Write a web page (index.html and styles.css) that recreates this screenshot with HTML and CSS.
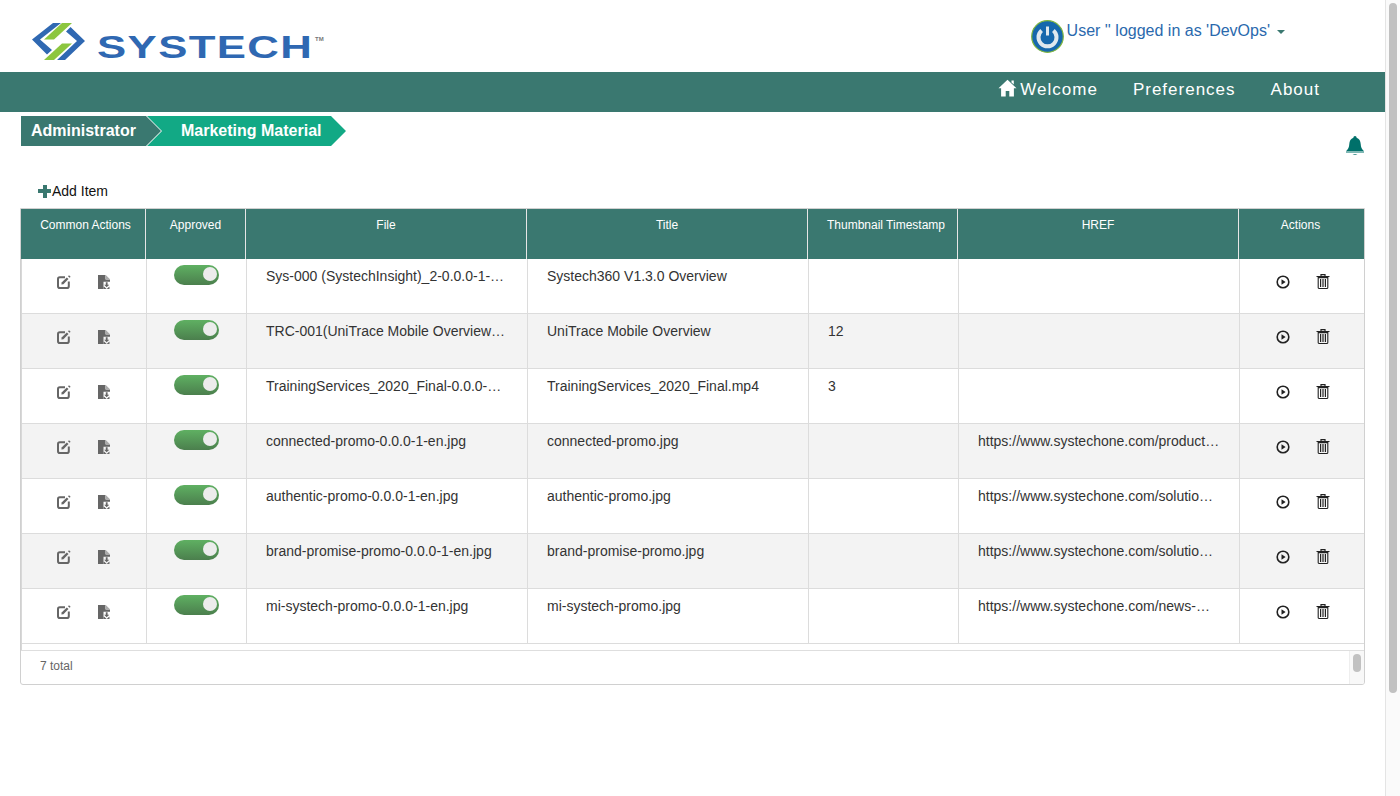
FILE: index.html
```html
<!DOCTYPE html>
<html lang="en">
<head>
<meta charset="utf-8">
<title>Marketing Material</title>
<link rel="stylesheet" href="styles.css">
</head>
<body>
<svg class="defs" width="0" height="0" aria-hidden="true">
  <symbol id="i-edit" viewBox="0 0 14 14">
    <path d="M8 2.200H2.800Q1 2.200 1 4v7.200Q1 13 2.800 13H10q1.800 0 1.800-1.800V6.600" fill="none" stroke="#666" stroke-width="2"/>
    <path d="M4.600 7.400 9.800 2.400l1.700 1.700-5.100 5.100-2 .3z" fill="#666"/>
    <path d="M11 1.200l1-1 1.600 1.600-1 1z" fill="#666"/>
  </symbol>
  <symbol id="i-file" viewBox="0 0 12 14">
    <path d="M0 0h7.500V4.500H12V6.800H5.500V14H0z" fill="#666"/>
    <path d="M8 .2 12 4.200H8z" fill="#aaa"/>
    <path d="M7.800 7.200h1.800v2.600h1.700L8.700 12.300 6.100 9.800h1.700z" fill="#666"/>
    <path d="M5.500 11.700h.8l2.400 2.200 2.400-2.200h.4V14H5.500z" fill="#666"/>
  </symbol>
  <symbol id="i-play" viewBox="0 0 14 14">
    <circle cx="7" cy="7" r="5.800" fill="none" stroke="#222" stroke-width="1.600"/>
    <path d="M5.500 4.300 9.600 7l-4.100 2.700z" fill="#222"/>
  </symbol>
  <symbol id="i-trash" viewBox="0 0 14 15">
    <path d="M5 2V.7h4V2M.5 2.500h13" fill="none" stroke="#222" stroke-width="1.200"/>
    <path d="M2.200 3.600h9.600V13.400q0 1.100-1.100 1.100H3.300q-1.100 0-1.100-1.100z" fill="none" stroke="#222" stroke-width="1.100"/>
    <path d="M4.600 5v8M7 5v8M9.400 5v8" stroke="#222" stroke-width="1.200"/>
  </symbol>
</svg>

<main class="page">
  <header class="top">
    <a class="logo" href="#">
      <svg class="logo-mark" width="54" height="38" viewBox="0 0 54 38" aria-hidden="true">
        <path d="M21 0h8L8 16.500 20 27l-5 4.500L0 16.500z" fill="#2f68b2"/>
        <path d="M53 18 33 37h-8L45 18 34 8.500 38.500 4z" fill="#2f68b2"/>
        <path d="M30 0h10L22 16.500H12z" fill="#8cc63f"/>
        <path d="M30 20.500h10L22 37H12z" fill="#8cc63f"/>
      </svg>
      <span class="logo-word">SYSTECH</span>
      <span class="logo-tm">TM</span>
    </a>
    <div class="user">
      <svg class="power" width="33" height="33" viewBox="0 0 33 33" aria-hidden="true">
        <circle cx="16.500" cy="16.500" r="15.800" fill="#1668ad" stroke="#7fb53f" stroke-width="1.200"/>
        <path d="M10.600 10.500a9 9 0 1 0 11.800 0" fill="none" stroke="#dfe8ee" stroke-width="4"/>
        <rect x="15" y="6.500" width="3" height="9" fill="#dfe8ee"/>
      </svg>
      <span class="user-name">User '' logged in as 'DevOps'</span>
      <span class="caret"></span>
    </div>
  </header>

  <nav class="nav">
    <a class="nav-link" href="#">
      <svg class="home" width="19" height="18" viewBox="0 0 18 18" aria-hidden="true"><path d="M9 .8 18 9.200h-2.600V17.500h-4.600v-5.500H7.200v5.500H2.600V9.200H0zM13 1.500h2.300v4L13 3.400z" fill="#fff"/></svg>Welcome
    </a>
    <a class="nav-link" href="#">Preferences</a>
    <a class="nav-link" href="#">About</a>
  </nav>

  <div class="toolbar">
    <div class="crumbs">
      <span class="crumb crumb-root">Administrator</span>
      <span class="crumb crumb-current">Marketing Material</span>
    </div>
    <svg class="bell" width="18" height="20" viewBox="0 0 18 20" aria-hidden="true"><path d="M9 0a1.600 1.600 0 0 1 1.600 1.700C13.300 2.500 14.500 5 14.700 8c.2 3.300 1 5 3.100 7H.200c2.100-2 2.900-3.700 3.100-7C3.500 5 4.700 2.500 7.400 1.700A1.600 1.600 0 0 1 9 0zM0 15.500h18v1H0zM6.500 18h5q-2.500 1.600-5 0z" fill="#00706a"/></svg>
  </div>

  <a class="add-item" href="#"><span class="plus"></span>Add Item</a>

  <section class="grid">
    <div class="grid-head row-cols">
      <div class="hcell hcell-first">Common Actions</div>
      <div class="hcell">Approved</div>
      <div class="hcell">File</div>
      <div class="hcell">Title</div>
      <div class="hcell hcell-thumb">Thumbnail Timestamp</div>
      <div class="hcell">HREF</div>
      <div class="hcell">Actions</div>
    </div>
    <div class="grid-body">
      <div class="row row-cols">
        <div class="cell icons icons-common"><svg class="ico"><use href="#i-edit"/></svg><svg class="ico ico-file"><use href="#i-file"/></svg></div>
        <div class="cell toggle-cell"><span class="toggle"></span></div>
        <div class="cell text">Sys-000 (SystechInsight)_2-0.0.0-1-en.mp4</div>
        <div class="cell text">Systech360 V1.3.0 Overview</div>
        <div class="cell text"></div>
        <div class="cell text"></div>
        <div class="cell icons icons-actions"><svg class="ico"><use href="#i-play"/></svg><svg class="ico ico-trash"><use href="#i-trash"/></svg></div>
      </div>
      <div class="row row-cols">
        <div class="cell icons icons-common"><svg class="ico"><use href="#i-edit"/></svg><svg class="ico ico-file"><use href="#i-file"/></svg></div>
        <div class="cell toggle-cell"><span class="toggle"></span></div>
        <div class="cell text">TRC-001(UniTrace Mobile Overview-0.0.0-1-en.mp4</div>
        <div class="cell text">UniTrace Mobile Overview</div>
        <div class="cell text">12</div>
        <div class="cell text"></div>
        <div class="cell icons icons-actions"><svg class="ico"><use href="#i-play"/></svg><svg class="ico ico-trash"><use href="#i-trash"/></svg></div>
      </div>
      <div class="row row-cols">
        <div class="cell icons icons-common"><svg class="ico"><use href="#i-edit"/></svg><svg class="ico ico-file"><use href="#i-file"/></svg></div>
        <div class="cell toggle-cell"><span class="toggle"></span></div>
        <div class="cell text">TrainingServices_2020_Final-0.0.0-1-en.mp4</div>
        <div class="cell text">TrainingServices_2020_Final.mp4</div>
        <div class="cell text">3</div>
        <div class="cell text"></div>
        <div class="cell icons icons-actions"><svg class="ico"><use href="#i-play"/></svg><svg class="ico ico-trash"><use href="#i-trash"/></svg></div>
      </div>
      <div class="row row-cols">
        <div class="cell icons icons-common"><svg class="ico"><use href="#i-edit"/></svg><svg class="ico ico-file"><use href="#i-file"/></svg></div>
        <div class="cell toggle-cell"><span class="toggle"></span></div>
        <div class="cell text">connected-promo-0.0.0-1-en.jpg</div>
        <div class="cell text">connected-promo.jpg</div>
        <div class="cell text"></div>
        <div class="cell text">https://www.systechone.com/products/connected</div>
        <div class="cell icons icons-actions"><svg class="ico"><use href="#i-play"/></svg><svg class="ico ico-trash"><use href="#i-trash"/></svg></div>
      </div>
      <div class="row row-cols">
        <div class="cell icons icons-common"><svg class="ico"><use href="#i-edit"/></svg><svg class="ico ico-file"><use href="#i-file"/></svg></div>
        <div class="cell toggle-cell"><span class="toggle"></span></div>
        <div class="cell text">authentic-promo-0.0.0-1-en.jpg</div>
        <div class="cell text">authentic-promo.jpg</div>
        <div class="cell text"></div>
        <div class="cell text">https://www.systechone.com/solutions/authentic</div>
        <div class="cell icons icons-actions"><svg class="ico"><use href="#i-play"/></svg><svg class="ico ico-trash"><use href="#i-trash"/></svg></div>
      </div>
      <div class="row row-cols">
        <div class="cell icons icons-common"><svg class="ico"><use href="#i-edit"/></svg><svg class="ico ico-file"><use href="#i-file"/></svg></div>
        <div class="cell toggle-cell"><span class="toggle"></span></div>
        <div class="cell text">brand-promise-promo-0.0.0-1-en.jpg</div>
        <div class="cell text">brand-promise-promo.jpg</div>
        <div class="cell text"></div>
        <div class="cell text">https://www.systechone.com/solutions/brand</div>
        <div class="cell icons icons-actions"><svg class="ico"><use href="#i-play"/></svg><svg class="ico ico-trash"><use href="#i-trash"/></svg></div>
      </div>
      <div class="row row-cols">
        <div class="cell icons icons-common"><svg class="ico"><use href="#i-edit"/></svg><svg class="ico ico-file"><use href="#i-file"/></svg></div>
        <div class="cell toggle-cell"><span class="toggle"></span></div>
        <div class="cell text">mi-systech-promo-0.0.0-1-en.jpg</div>
        <div class="cell text">mi-systech-promo.jpg</div>
        <div class="cell text"></div>
        <div class="cell text">https://www.systechone.com/news-Mi-systech-promo</div>
        <div class="cell icons icons-actions"><svg class="ico"><use href="#i-play"/></svg><svg class="ico ico-trash"><use href="#i-trash"/></svg></div>
      </div>
    </div>
    <footer class="grid-foot">
      <span class="total">7 total</span>
      <div class="foot-scroll"><span class="foot-thumb"></span></div>
    </footer>
  </section>
</main>

<aside class="scrollbar" aria-hidden="true"><span class="scroll-thumb"></span></aside>
</body>
</html>
```
FILE: styles.css
```css
* { box-sizing: border-box; }

html, body { height: 100%; }

body {
  margin: 0;
  display: flex;
  overflow: hidden;
  background: #fff;
  color: #333;
  font-family: "Liberation Sans", Arial, sans-serif;
  font-size: 14px;
}

a { text-decoration: none; color: inherit; }

.defs { display: block; width: 0; height: 0; }

.page { flex: 1 1 auto; min-width: 0; display: flex; flex-direction: column; }

/* Header */
.top {
  height: 72px;
  display: flex;
  justify-content: space-between;
  padding: 0 100px 0 32px;
}

.logo { display: flex; align-items: flex-start; }
.logo-mark { margin-top: 23px; flex: none; }
.logo-word {
  display: block;
  width: 216px;
  margin: 30px 0 0 11px;
  color: #2f68b2;
  font-size: 31px;
  line-height: 36px;
  font-weight: 700;
  letter-spacing: 1px;
  transform: scaleX(1.410);
  transform-origin: left center;
  white-space: nowrap;
}
.logo-tm { margin: 36px 0 0 2px; color: #777; font-size: 6px; font-weight: 700; line-height: 6px; }

.user { display: flex; align-items: flex-start; padding-top: 20px; color: #2a69ad; font-size: 16px; }
.power { flex: none; margin-right: 3px; }
.user-name { line-height: 20px; margin-top: 1px; }
.caret {
  margin: 10px 0 0 7px;
  border-top: 4px solid #3a7870;
  border-left: 4px solid transparent;
  border-right: 4px solid transparent;
}

/* Nav */
.nav {
  height: 40px;
  flex: none;
  display: flex;
  align-items: flex-start;
  justify-content: flex-end;
  gap: 35px;
  padding: 8px 65px 0 0;
  background: #3a7870;
  color: #fff;
  font-size: 17px;
  line-height: 20px;
  letter-spacing: 1px;
}
.nav-link { display: flex; align-items: center; }
.home { margin: -4px 3px 0 0; }

/* Breadcrumb row */
.toolbar {
  height: 39px;
  margin-top: 4px;
  padding: 0 21px;
  display: flex;
  justify-content: space-between;
  align-items: flex-start;
  flex: none;
}
.crumbs { display: flex; }
.crumb {
  height: 30px;
  color: #fff;
  font-size: 16px;
  font-weight: 700;
  line-height: 30px;
}
.crumb-root {
  width: 140px;
  padding-left: 10px;
  background: #3a7870;
  clip-path: polygon(0 0, 125px 0, 140px 50%, 125px 100%, 0 100%);
}
.crumb-current {
  width: 199px;
  margin-left: -14px;
  padding-left: 34px;
  background: #12a985;
  clip-path: polygon(0 0, 184px 0, 199px 50%, 184px 100%, 0 100%, 15px 50%);
}
.bell { margin-top: 20px; }

/* Add item */
.add-item {
  height: 20px;
  margin: 26px 0 7px 38px;
  flex: none;
  display: flex;
  align-items: center;
  color: #111;
  line-height: 20px;
}
.plus {
  width: 13px;
  height: 13px;
  margin-right: 1px;
  background:
    linear-gradient(#3a7870, #3a7870) center / 100% 4px no-repeat,
    linear-gradient(#3a7870, #3a7870) center / 4px 100% no-repeat;
}

/* Grid */
.grid {
  width: 1345px;
  height: 477px;
  margin-left: 20px;
  flex: none;
  border: 1px solid #d0d0d0;
  border-radius: 0 0 3px 3px;
  overflow: hidden;
  display: flex;
  flex-direction: column;
}
.row-cols { display: grid; grid-template-columns: 125px 100px 281px 281px 150px 281px 125px; }

.grid-head { height: 50px; flex: none; background: #3a7870; color: #fff; font-size: 12px; }
.hcell {
  padding-top: 9px;
  line-height: 14px;
  text-align: center;
  border-right: 1px solid #e6e6e6;
}
.hcell-first { padding-left: 5px; }
.hcell-thumb { padding-left: 7px; white-space: nowrap; }
.hcell:last-child { border-right: 0; padding-right: 2px; }

.grid-body { height: 391px; flex: none; border-left: 1px solid #d8d8d8; overflow: hidden; }
.row { height: 55px; width: 1343px; background: #fff; }
.row:nth-child(even) { background: #f3f3f3; }
.cell { border-right: 1px solid #dcdcdc; border-bottom: 1px solid #dcdcdc; min-width: 0; }
.cell:last-child { border-right: 0; }

.text {
  padding: 8px 19px 0;
  color: #333;
  line-height: 18px;
  white-space: nowrap;
  overflow: hidden;
  text-overflow: ellipsis;
}

.icons { display: flex; align-items: flex-start; padding-top: 16px; }
.icons-common { padding-left: 35px; gap: 27px; }
.icons-actions { padding-left: 36px; gap: 26px; }
.ico { display: block; width: 14px; height: 14px; flex: none; }
.ico-file { width: 12px; }
.ico-trash { width: 14px; height: 15px; margin-top: -1px; }

.toggle-cell { padding: 6px 0 0 27px; }
.toggle {
  display: block;
  position: relative;
  width: 45px;
  height: 20px;
  border-radius: 10px;
  background: linear-gradient(#5fb062, #4b7f4d);
}
.toggle::after {
  content: "";
  position: absolute;
  top: 2px;
  right: 2px;
  width: 14px;
  height: 14px;
  border-radius: 50%;
  background: #ececec;
}

.grid-foot { flex: 1 1 auto; display: flex; justify-content: space-between; border-top: 1px solid #dedede; }
.total { padding: 8px 0 0 19px; color: #666; font-size: 12px; line-height: 14px; }
.foot-scroll { width: 15px; padding: 3px 0 0 3px; background: #f8f8f8; border-left: 1px solid #eee; }
.foot-thumb { display: block; width: 8px; height: 18px; border-radius: 4px; background: #c1c1c1; }

/* Window scrollbar */
.scrollbar { width: 15px; flex: none; padding: 3px 3px 0 3px; background: #fafafa; border-left: 1px solid #e4e4e4; }
.scroll-thumb { display: block; width: 8px; height: 690px; border-radius: 4px; background: #c1c1c1; }
```
